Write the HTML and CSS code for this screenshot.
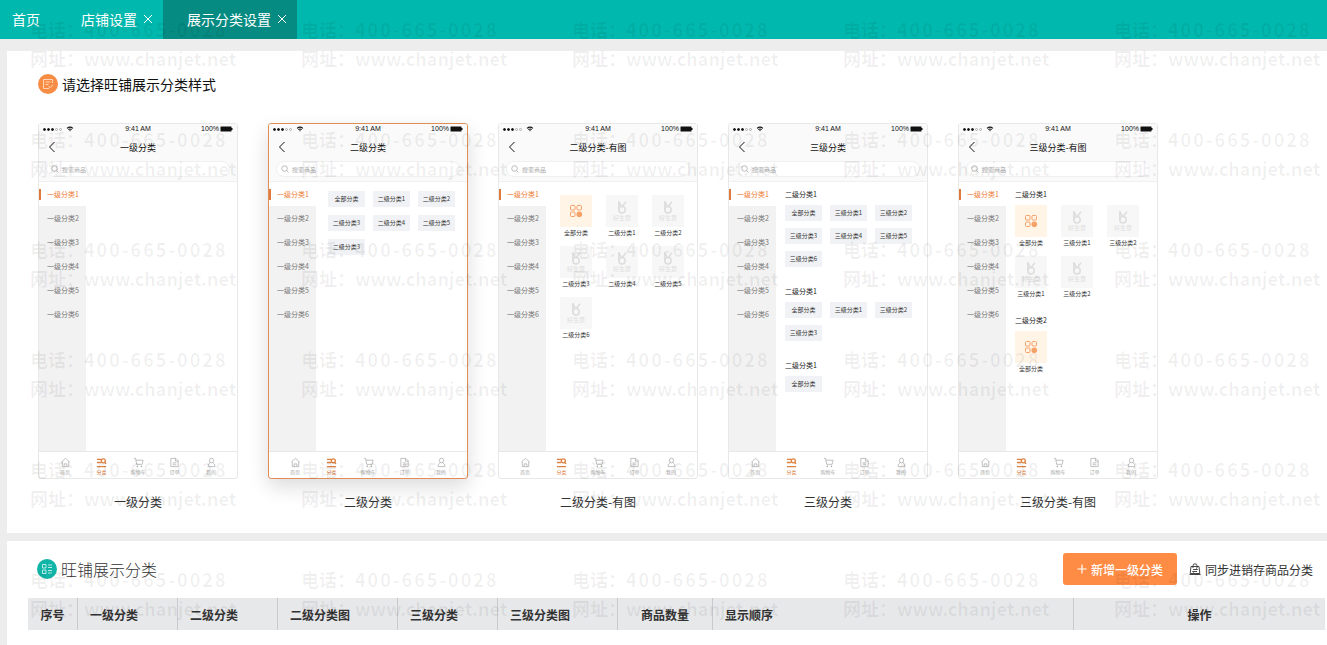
FILE: index.html
```html
<!DOCTYPE html>
<html lang="zh-CN">
<head>
    <meta charset="UTF-8">
    <meta name="viewport" content="width=device-width, initial-scale=1.0">
    <title>展示分类设置</title>
    <link rel="stylesheet" href="styles.css">
</head>
<body>
    <svg class="sprite" aria-hidden="true">
        <symbol id="i-wifi" viewBox="0 0 10 8"><path d="M0.6 2.6Q5-1 9.4 2.6L8.4 3.7Q5 1 1.6 3.7ZM2.3 4.4Q5 2.3 7.7 4.4L6.8 5.4Q5 4 3.2 5.4ZM3.8 6.1Q5 5.3 6.2 6.1L5 7.4Z" fill="currentColor"/></symbol>
        <symbol id="i-battery" viewBox="0 0 13 6"><path d="M1 .5h10a.5.5 0 0 1 .5.5v1h1v2h-1v1a.5.5 0 0 1-.5.5H1A.5.5 0 0 1 .5 5V1A.5.5 0 0 1 1 .5Z" fill="currentColor"/></symbol>
        <symbol id="i-back" viewBox="0 0 8 12"><path d="M6.5 1 1.5 6l5 5" fill="none" stroke="currentColor"/></symbol>
        <symbol id="i-search" viewBox="0 0 8 8"><circle cx="3.5" cy="3.5" r="2.8" fill="none" stroke="currentColor" stroke-width=".8"/><path d="m5.5 5.5 2 2" stroke="currentColor" stroke-width=".8"/></symbol>
        <symbol id="i-grid" viewBox="0 0 14 14"><g fill="none" stroke="currentColor"><rect x="1.5" y="1.5" width="4.5" height="4.5" rx="1"/><rect x="8" y="1.5" width="4.5" height="4.5" rx="1"/><rect x="1.5" y="8" width="4.5" height="4.5" rx="1"/></g><circle cx="10.3" cy="10.3" r="2.8" fill="currentColor"/></symbol>
        <symbol id="i-rabbit" viewBox="0 0 10 14"><g fill="none" stroke="currentColor" stroke-width="1.500"><path d="M1.800 10V1.200L4.200 6.500M9 1.800 5.200 6.500"/><circle cx="5" cy="9.800" r="3.200"/></g></symbol>
        <symbol id="i-home" viewBox="0 0 12 12"><path d="M1.500 5.500 6 1.500l4.500 4M2.500 5v5.500h7V5M4.500 10.500V7.500h3v3" fill="none" stroke="currentColor" stroke-width=".8"/></symbol>
        <symbol id="i-cate" viewBox="0 0 12 12"><path d="M1 2.500h5M1 6h4.500M1 10.500h10M9.500 6l1.500 1.500" stroke="currentColor" stroke-width="1.400"/><circle cx="8" cy="4.200" r="2.200" fill="none" stroke="currentColor" stroke-width="1.400"/></symbol>
        <symbol id="i-cart" viewBox="0 0 12 12"><path d="M1 1.500h1.800l1.200 6.500h6L11 3.500H3.200" fill="none" stroke="currentColor" stroke-width=".8"/><circle cx="4.700" cy="10.200" r=".9" fill="currentColor"/><circle cx="9.200" cy="10.200" r=".9" fill="currentColor"/></symbol>
        <symbol id="i-order" viewBox="0 0 12 12"><path d="M2 1.500h5.500L10 4v6.500H2ZM7 1.500V4.500h3M4 6.500h4M4 8.500h4" fill="none" stroke="currentColor" stroke-width=".8"/></symbol>
        <symbol id="i-user" viewBox="0 0 12 12"><ellipse cx="6" cy="3.800" rx="2.300" ry="2.600" fill="none" stroke="currentColor" stroke-width=".8"/><path d="M4.600 6Q2 7.500 2.200 10.500h7.600Q10 7.500 7.400 6" fill="none" stroke="currentColor" stroke-width=".8"/></symbol>
    </svg>

    <header>
        <nav class="tabs">
            <a class="tab tab-home" href="#">首页</a>
            <div class="tab">
                <a href="#shop">店铺设置</a>
                <button class="close" type="button" aria-label="关闭店铺设置"><svg viewBox="0 0 10 10"><path d="m1 1 8 8M9 1 1 9" stroke="currentColor"/></svg></button>
            </div>
            <div class="tab active">
                <a href="#category">展示分类设置</a>
                <button class="close" type="button" aria-label="关闭展示分类设置"><svg viewBox="0 0 10 10"><path d="m1 1 8 8M9 1 1 9" stroke="currentColor"/></svg></button>
            </div>
        </nav>
    </header>

    <main>
        <section class="panel style-panel">
            <h2 class="style-title">
                <svg class="badge" viewBox="0 0 20 20"><circle cx="10" cy="10" r="10" fill="#f78c45"/><path d="M14.500 9V5.500h-9v9H11M7.500 8h5M7.500 10.500h3M10.500 12l1.500 1.800 3-3" fill="none" stroke="#ffdcc2" stroke-width=".9"/></svg>
                请选择旺铺展示分类样式
            </h2>
            <div class="style-list" id="style-list"></div>
        </section>

        <section class="panel table-panel">
            <div class="table-bar">
                <h2 class="table-title">
                    <svg class="badge" viewBox="0 0 20 20"><circle cx="10" cy="10" r="10" fill="#10b5a8"/><path d="M5.500 5.500h3.500v3.500H5.500ZM5.500 11h3.500v3.500H5.500ZM11 6h4M11 8.500h4M11 11.500h4M11 14h4" fill="none" stroke="#c9f3ef" stroke-width=".9"/></svg>
                    旺铺展示分类
                </h2>
                <div class="actions">
                    <button class="btn-add" type="button">
                        <svg viewBox="0 0 10 10"><path d="M5 .5v9M.5 5h9" stroke="currentColor" stroke-width="1.200"/></svg>
                        新增一级分类
                    </button>
                    <button class="btn-sync" type="button">
                        <svg viewBox="0 0 12 12"><path d="M2 3.500h8l.8 7H1.200ZM4 5V2.800a2 2 0 0 1 4 0V5M.5 11.500h11M4 6.500h4.500L7.300 5.500M8 8.500H3.500l1.200 1" fill="none" stroke="currentColor" stroke-width=".9"/></svg>
                        同步进销存商品分类
                    </button>
                </div>
            </div>
            <table>
                <thead>
                    <tr>
                        <th class="w50 center">序号</th>
                        <th class="w100">一级分类</th>
                        <th class="w100">二级分类</th>
                        <th class="w120">二级分类图</th>
                        <th class="w100">三级分类</th>
                        <th class="w120">三级分类图</th>
                        <th class="w95 center">商品数量</th>
                        <th>显示顺序</th>
                        <th class="w251 center">操作</th>
                    </tr>
                </thead>
            </table>
        </section>
    </main>

    <div class="watermark" id="watermark" aria-hidden="true"></div>
    <script src="script.js"></script>
</body>
</html>
```
FILE: styles.css
```css
* {
    margin: 0;
    padding: 0;
    box-sizing: border-box;
}
body {
    position: relative;
    min-height: 100vh;
    display: flex;
    flex-direction: column;
    background: #ededed;
    color: #333;
    font-family: "Noto Sans CJK SC", sans-serif;
    font-size: 12px;
}
button {
    border: none;
    background: none;
    color: inherit;
    font: inherit;
    cursor: pointer;
}
a {
    color: inherit;
    text-decoration: none;
}
svg {
    display: block;
    flex: none;
}
.sprite {
    position: absolute;
    width: 0;
    height: 0;
}

/* top tabs */
header {
    background: #00b8ad;
    color: #fff;
}
.tabs {
    display: flex;
    height: 39px;
    font-size: 14px;
    line-height: 20px;
}
.tab {
    display: flex;
    align-items: center;
    gap: 6px;
    padding: 0 10px 2px 24px;
}
.tab-home {
    padding-left: 12px;
    padding-right: 17px;
}
.tab.active {
    background: #058b82;
}
.close svg {
    width: 10px;
    height: 10px;
}

main {
    flex: 1;
    display: flex;
    flex-direction: column;
    gap: 8px;
    padding: 12px 0 0 7px;
}
.panel {
    background: #fff;
}
.badge {
    width: 20px;
    height: 20px;
}

/* style picker */
.style-panel {
    padding: 21px 31px 19px;
}
.style-title {
    display: flex;
    align-items: center;
    gap: 4px;
    height: 24px;
    color: #111;
    font-size: 14px;
    font-weight: 400;
    line-height: 20px;
}
.style-list {
    display: flex;
    gap: 30px;
    margin-top: 27px;
}
.style-item {
    position: relative;
    width: 200px;
    cursor: pointer;
}
.style-item input {
    position: absolute;
    opacity: 0;
}
.caption {
    display: block;
    margin-top: 11px;
    line-height: 24px;
    text-align: center;
}
.phone {
    display: flex;
    flex-direction: column;
    height: 356px;
    border: 1px solid #e8e8e8;
    border-radius: 3px;
    background: #fff;
    overflow: hidden;
}
input:checked + .phone {
    border-color: #e08d56;
    box-shadow: 0 8px 20px rgba(0, 0, 0, .14);
}
.phone-head {
    padding: 0 4px;
    height: 58px;
    border-bottom: 1px solid #f0f0f0;
    background: #fafafa;
    color: #111;
}
.status {
    display: grid;
    grid-template-columns: 1fr auto 1fr;
    align-items: center;
    height: 10px;
    font: 7px/10px "Liberation Sans", sans-serif;
}
.signal,
.power {
    display: flex;
    align-items: center;
    gap: 4px;
}
.power {
    justify-content: flex-end;
    gap: 1px;
}
.dots {
    display: flex;
    gap: 1px;
}
.dots i {
    width: 3px;
    height: 3px;
    border: 1px solid #111;
    border-radius: 50%;
    background: #111;
}
.dots i:nth-child(n+4) {
    border-color: #aaa;
    background: #fff;
}
.wifi {
    width: 8px;
    height: 6px;
}
.battery {
    width: 13px;
    height: 6px;
}
.phone-title {
    display: grid;
    grid-template-columns: 1fr auto 1fr;
    align-items: center;
    height: 26px;
    margin-bottom: 1px;
    padding: 0 5px;
    font-size: 9px;
}
.phone-title::after {
    content: "";
}
.back {
    width: 8px;
    height: 12px;
}
.search {
    display: flex;
    align-items: center;
    gap: 3px;
    height: 16px;
    margin: 0 3px;
    padding-left: 4px;
    border: 1px solid #f0f0f0;
    border-radius: 8px;
    background: #fff;
    color: #aaa;
    font-size: 6px;
}
.search svg {
    width: 8px;
    height: 8px;
}
.phone-body {
    flex: 1;
    display: flex;
}
.side {
    width: 47px;
    background: #f2f2f2;
    color: #777;
    font-size: 7px;
    line-height: 24px;
}
.side span {
    display: block;
    height: 24px;
    padding-left: 8px;
}
.side .on {
    display: flex;
    align-items: center;
    gap: 6px;
    padding-left: 0;
    background: #fff;
    color: #ee7d35;
}
.side .on::before {
    content: "";
    width: 2px;
    height: 11px;
    background: #dd7a3c;
}
.content {
    flex: 1;
    padding: 9px 9px 0 12px;
    font-size: 6px;
}
.content.pics {
    padding: 13px 0 0 14px;
}
.content.grouped {
    padding: 4px 0 0 9px;
}
.group + .group {
    margin-top: 16px;
}
.grouped.pics .group + .group {
    margin-top: 12px;
}
.group-name {
    display: block;
    height: 16px;
    margin-bottom: 3px;
    color: #222;
    font-size: 7px;
    line-height: 16px;
}
.chips {
    display: grid;
    grid-template-columns: repeat(3, 37px);
    gap: 8px;
}
.grouped .chips {
    row-gap: 7px;
}
.chip {
    height: 16px;
    background: #f1f2f5;
    line-height: 16px;
    text-align: center;
}
.tiles {
    display: grid;
    grid-template-columns: repeat(3, 32px);
    gap: 7px 14px;
}
.tile {
    display: flex;
    flex-direction: column;
    align-items: center;
    line-height: 12px;
    white-space: nowrap;
}
.thumb {
    display: flex;
    flex-direction: column;
    align-items: center;
    justify-content: center;
    width: 32px;
    height: 32px;
    background: #f7f7f7;
    color: #ddd;
    line-height: 8px;
}
.thumb svg {
    width: 10px;
    height: 14px;
}
.thumb.all {
    background: #fff4e6;
    color: #f6a168;
}
.thumb.all svg {
    width: 14px;
    height: 14px;
}
.tabbar {
    display: flex;
    justify-content: space-between;
    height: 27px;
    padding: 5px 16px 0;
    border-top: 1px solid #e8e8e8;
    color: #aaa;
    font-size: 5px;
    line-height: 8px;
}
.tabbar span {
    display: flex;
    flex-direction: column;
    align-items: center;
    width: 20px;
}
.tabbar svg {
    width: 11px;
    height: 11px;
}
.tabbar .on {
    color: #dd8040;
}

/* category table */
.table-panel {
    flex: 1;
    padding: 12px 2px 0 21px;
}
.table-bar {
    display: flex;
    align-items: center;
    justify-content: space-between;
    height: 32px;
    padding: 0 12px 0 9px;
}
.table-title {
    display: flex;
    align-items: center;
    gap: 4px;
    font-size: 16px;
    font-weight: 300;
}
.actions {
    display: flex;
    gap: 12px;
}
.btn-add,
.btn-sync {
    display: flex;
    align-items: center;
    gap: 4px;
    height: 32px;
}
.btn-add {
    padding: 0 14px;
    border-radius: 3px;
    background: #ff8c44;
    color: #fff;
    font-weight: 500;
}
.btn-add svg {
    width: 10px;
    height: 10px;
}
.btn-sync svg {
    width: 12px;
    height: 12px;
}
table {
    width: 100%;
    margin-top: 13px;
    border-collapse: separate;
    border-spacing: 0;
    table-layout: fixed;
}
th {
    height: 32px;
    padding: 0 12px;
    border-right: 1px solid #c9cacc;
    background: #e7e8ea;
    font-weight: 700;
    text-align: left;
    white-space: nowrap;
}
th:last-child {
    border-right: none;
}
th.center {
    padding: 0;
    text-align: center;
}
.w50 { width: 50px; }
.w95 { width: 95px; }
.w100 { width: 100px; }
.w120 { width: 120px; }
.w251 { width: 251px; }

/* watermark laid over the whole page */
.watermark {
    position: absolute;
    inset: 0;
    display: grid;
    grid-template-columns: repeat(auto-fill, 210px);
    grid-auto-rows: 110px;
    column-gap: 61px;
    padding: 15px 0 0 30px;
    color: rgba(0, 0, 0, .06);
    font-size: 18px;
    font-weight: 700;
    line-height: 29px;
    overflow: hidden;
    pointer-events: none;
    white-space: nowrap;
}
.watermark .tel {
    letter-spacing: 2px;
}
.watermark p {
    height: 29px;
}
```
FILE: script.js
```js
const icon = (name, cls = '') => `<svg class="${cls}"><use href="#i-${name}"/></svg>`;

// each style: groups of second/third level names, shown as chips or as picture tiles
const styles = [
    { title: '一级分类', groups: [] },
    { title: '二级分类', checked: true, groups: [
        { items: ['全部分类', '二级分类1', '二级分类2', '二级分类3', '二级分类4', '二级分类5', '二级分类3'] }
    ] },
    { title: '二级分类-有图', pics: true, groups: [
        { items: ['全部分类', '二级分类1', '二级分类2', '二级分类3', '二级分类4', '二级分类5', '二级分类6'] }
    ] },
    { title: '三级分类', groups: [
        { name: '二级分类1', items: ['全部分类', '三级分类1', '三级分类2', '三级分类3', '三级分类4', '三级分类5', '三级分类6'] },
        { name: '二级分类1', items: ['全部分类', '三级分类1', '三级分类2', '三级分类3'] },
        { name: '二级分类1', items: ['全部分类'] }
    ] },
    { title: '三级分类-有图', pics: true, groups: [
        { name: '二级分类1', items: ['全部分类', '三级分类1', '三级分类2', '三级分类1', '三级分类2'] },
        { name: '二级分类2', items: ['全部分类'] }
    ] }
];

const tabs = [['home', '首页'], ['cate', '分类'], ['cart', '购物车'], ['order', '订单'], ['user', '我的']];

function renderTile(text) {
    const thumb = text === '全部分类'
        ? `<span class="thumb all">${icon('grid')}</span>`
        : `<span class="thumb">${icon('rabbit')}好生意</span>`;
    return `<span class="tile">${thumb}${text}</span>`;
}

function renderGroup(group, pics) {
    const name = group.name ? `<span class="group-name">${group.name}</span>` : '';
    const items = pics
        ? `<div class="tiles">${group.items.map(renderTile).join('')}</div>`
        : `<div class="chips">${group.items.map(t => `<span class="chip">${t}</span>`).join('')}</div>`;
    return `<div class="group">${name}${items}</div>`;
}

function renderStyle(s) {
    const side = [1, 2, 3, 4, 5, 6].map(n => `<span class="${n === 1 ? 'on' : ''}">一级分类${n}</span>`).join('');
    const grouped = s.groups.some(g => g.name);
    const cls = `${s.pics ? 'pics' : ''} ${grouped ? 'grouped' : ''}`;
    return `<label class="style-item">
        <input type="radio" name="style" ${s.checked ? 'checked' : ''}>
        <div class="phone">
            <div class="phone-head">
                <div class="status">
                    <span class="signal"><span class="dots"><i></i><i></i><i></i><i></i><i></i></span>${icon('wifi', 'wifi')}</span>
                    <span>9:41 AM</span>
                    <span class="power">100%${icon('battery', 'battery')}</span>
                </div>
                <div class="phone-title">${icon('back', 'back')}<span>${s.title}</span></div>
                <div class="search">${icon('search')}搜索商品</div>
            </div>
            <div class="phone-body">
                <div class="side">${side}</div>
                <div class="content ${cls}">${s.groups.map(g => renderGroup(g, s.pics)).join('')}</div>
            </div>
            <div class="tabbar">${tabs.map(([i, t]) => `<span class="${i === 'cate' ? 'on' : ''}">${icon(i)}${t}</span>`).join('')}</div>
        </div>
        <span class="caption">${s.title}</span>
    </label>`;
}

document.getElementById('style-list').innerHTML = styles.map(renderStyle).join('');

// enough watermark cells to cover the page
const mark = document.getElementById('watermark');
const cols = getComputedStyle(mark).gridTemplateColumns.split(' ').length;
const rows = Math.ceil(document.body.offsetHeight / 110);
mark.innerHTML = '<div><p>电话：<span class="tel">400-665-0028</span></p><p>网址：www.chanjet.net</p></div>'.repeat(cols * rows);
```
